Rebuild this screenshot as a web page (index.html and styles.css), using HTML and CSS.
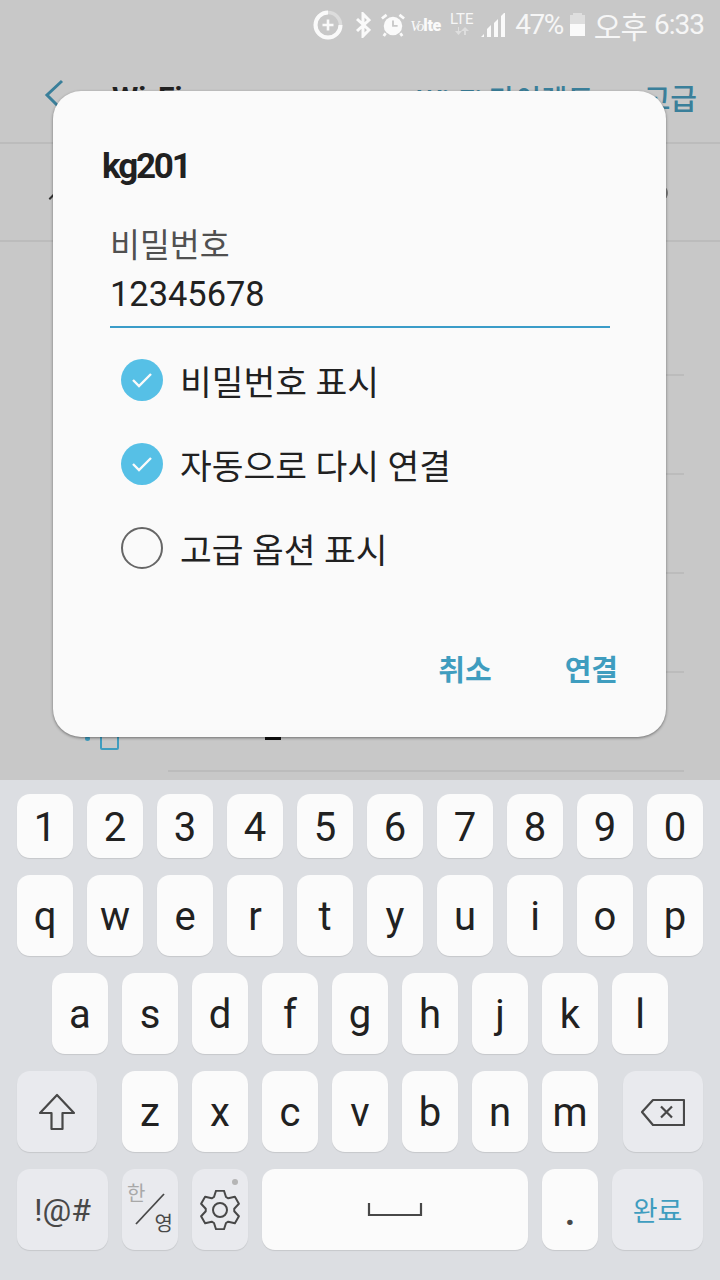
FILE: index.html
```html
<!DOCTYPE html>
<html>

<head>
	<title>Wi-Fi</title>
	<meta charset="utf-8">
	<link rel="stylesheet" href="styles.css">
</head>

<body>
	<div id="screen">
		<div class="status">
			<svg class="ic-saver" width="30" height="30" viewBox="0 0 30 30">
				<circle cx="15" cy="15" r="12.5" fill="none" stroke="#dcdcdc" stroke-width="3.5"/>
				<path d="M15 2.5A12.5 12.5 0 1 0 27.5 15" fill="none" stroke="#fafafa" stroke-width="4"/>
				<path d="M15 9.5v11M9.5 15h11" stroke="#fafafa" stroke-width="2.6"/>
			</svg>
			<svg class="ic-bt" width="16" height="26" viewBox="0 0 16 26">
				<path d="M2 7l12 11-6 6V2l6 6L2 19" fill="none" stroke="#fafafa" stroke-width="3"/>
			</svg>
			<svg class="ic-alarm" width="24" height="24" viewBox="0 0 26 26">
				<circle cx="13" cy="14" r="10" fill="#fafafa"/>
				<path d="M13 8v6h5" fill="none" stroke="#c8c8c8" stroke-width="2"/>
				<path d="M1 6l5-4M25 6l-5-4M5 22l-2 3M21 22l2 3" stroke="#fafafa" stroke-width="3"/>
			</svg>
			<div class="volte"><i>Vo</i><b>lte</b></div>
			<div class="lte">
				<span>LTE</span>
				<svg width="16" height="8" viewBox="0 0 14 8">
					<path d="M4 0v4h3L3.5 8 0 4h3V0zM10 0l4 4h-3v4H9V4H6z" fill="#dedede"/>
				</svg>
			</div>
			<svg class="ic-signal" width="24" height="24" viewBox="0 0 24 24">
				<path d="M0 24l3-3v3zM6 24v-8l4-4v12zM13 24V10l4-4v18zM20 24V3l4-4v25z" fill="#fafafa"/>
			</svg>
			<span class="s-text pct">47%</span>
			<div class="batt">
				<div class="batt-cap"></div>
				<div class="batt-body"><div class="batt-fill"></div></div>
			</div>
			<span class="s-text ampm">오후</span>
			<span class="s-text time">6:33</span>
		</div>

		<div class="appbar">
			<svg class="back" width="20" height="34" viewBox="0 0 20 34">
				<path d="M18 2L3 16l15 15" fill="none" stroke="#3a7f9a" stroke-width="3"/>
			</svg>
			<span class="appbar-title">Wi-Fi</span>
			<span class="appbar-link direct">Wi-Fi 다이렉트</span>
			<span class="appbar-link">고급</span>
		</div>

		<div class="current">
			<div class="cur-icon"></div>
			<div class="cur-right"></div>
		</div>

		<div class="list">
			<div class="row first"></div>
			<div class="row"></div>
			<div class="row"></div>
			<div class="row"></div>
			<div class="row last">
				<div class="lock-dot"></div>
				<div class="lock-box"></div>
				<div class="row-dash"></div>
			</div>
		</div>

		<div class="keyboard">
			<div class="kb-row nums">
				<div class="key">1</div>
				<div class="key">2</div>
				<div class="key">3</div>
				<div class="key">4</div>
				<div class="key">5</div>
				<div class="key">6</div>
				<div class="key">7</div>
				<div class="key">8</div>
				<div class="key">9</div>
				<div class="key">0</div>
			</div>
			<div class="kb-row">
				<div class="key">q</div>
				<div class="key">w</div>
				<div class="key">e</div>
				<div class="key">r</div>
				<div class="key">t</div>
				<div class="key">y</div>
				<div class="key">u</div>
				<div class="key">i</div>
				<div class="key">o</div>
				<div class="key">p</div>
			</div>
			<div class="kb-row centered">
				<div class="key">a</div>
				<div class="key">s</div>
				<div class="key">d</div>
				<div class="key">f</div>
				<div class="key">g</div>
				<div class="key">h</div>
				<div class="key">j</div>
				<div class="key">k</div>
				<div class="key">l</div>
			</div>
			<div class="kb-row">
				<div class="key func shift">
					<svg width="38" height="38" viewBox="0 0 38 38">
						<path d="M19 2L2 20h11.5v16h11V20H36z" fill="none" stroke="#484848" stroke-width="2.2" stroke-linejoin="round"/>
					</svg>
				</div>
				<div class="key">z</div>
				<div class="key">x</div>
				<div class="key">c</div>
				<div class="key">v</div>
				<div class="key">b</div>
				<div class="key">n</div>
				<div class="key">m</div>
				<div class="key func del">
					<svg width="44" height="28" viewBox="0 0 44 28">
						<path d="M1 14L12 2h31v25H12z" fill="none" stroke="#484848" stroke-width="2.2" stroke-linejoin="round"/>
						<path d="M20 8.500l11 11M31 8.500l-11 11" stroke="#484848" stroke-width="2.2"/>
					</svg>
				</div>
			</div>
			<div class="kb-row">
				<div class="key func sym">!@#</div>
				<div class="key func hanja">
					<span class="han">한</span>
					<span class="yeong">영</span>
					<svg class="slash" width="56" height="82" viewBox="0 0 56 82">
						<path d="M14 55L42 25" stroke="#484848" stroke-width="1.8"/>
					</svg>
				</div>
				<div class="key func gear">
					<svg width="40" height="40" viewBox="0 0 40 40">
						<polygon points="14,7 16,.8 24,.8 26,7 28.260,8.300 34.890,6.790 38.890,13.710 34.260,18.700 34.260,21.300 38.890,26.290 34.890,33.210 28.260,31.700 26,33 24,39.200 16,39.200 14,33 11.740,31.700 5.110,33.210 1.110,26.290 5.740,21.300 5.740,18.700 1.110,13.710 5.110,6.790 11.740,8.300" fill="none" stroke="#484848" stroke-width="2" stroke-linejoin="round"/>
						<circle cx="20" cy="20" r="7" fill="none" stroke="#484848" stroke-width="2"/>
					</svg>
					<div class="gear-dot"></div>
				</div>
				<div class="key space">
					<svg width="56" height="14" viewBox="0 0 56 14">
						<path d="M2 0v12h52V0" fill="none" stroke="#484848" stroke-width="2.2"/>
					</svg>
				</div>
				<div class="key period">.</div>
				<div class="key func done">완료</div>
			</div>
		</div>

		<div class="dialog">
			<div class="dlg-title">kg201</div>
			<div class="field">
				<div class="field-label">비밀번호</div>
				<div class="field-value">12345678</div>
			</div>
			<div class="option">
				<div class="check on">
					<svg width="22" height="18" viewBox="0 0 22 18">
						<path d="M2 9l6 6L20 3" fill="none" stroke="#fafafa" stroke-width="2.4"/>
					</svg>
				</div>
				<span>비밀번호 표시</span>
			</div>
			<div class="option">
				<div class="check on">
					<svg width="22" height="18" viewBox="0 0 22 18">
						<path d="M2 9l6 6L20 3" fill="none" stroke="#fafafa" stroke-width="2.4"/>
					</svg>
				</div>
				<span>자동으로 다시 연결</span>
			</div>
			<div class="option">
				<div class="check"></div>
				<span>고급 옵션 표시</span>
			</div>
			<div class="dlg-buttons">
				<span class="dlg-btn">취소</span>
				<span class="dlg-btn">연결</span>
			</div>
		</div>
	</div>
</body>

</html>
```

FILE: styles.css
```css
:root {
	--dim: #c8c8c8;
	--line: #bcbcbc;
	--teal-dim: #3a7f9a;
	--teal: #3f9dbf;
	--kb: #dcdee2;
	--key: #fbfbfb;
	--key-func: #e9eaee;
	--ink: #212121;
	--icon: #484848;
}

* {
	box-sizing: border-box;
}

body {
	margin: 0;
	padding: 0;
	font-family: Roboto, "Noto Sans CJK KR", sans-serif;
}

#screen {
	position: relative;
	width: 720px;
	height: 1280px;
	overflow: hidden;
	display: flex;
	flex-direction: column;
	background-color: var(--dim);
}

/* status bar */
.status {
	height: 52px;
	flex: none;
	display: flex;
	align-items: center;
	justify-content: flex-end;
	padding: 0 16px 3px 0;
	color: #f6f6f6;
}

.ic-saver {
	margin-right: 12px;
}

.ic-bt {
	margin-right: 10px;
}

.ic-alarm {
	margin-right: 5px;
}

.volte {
	width: 31px;
	font-size: 13px;
	color: #fafafa;
	margin-right: 8px;
	margin-top: 2px;
	white-space: nowrap;
}

.volte i {
	font-family: "Liberation Serif", serif;
	font-size: 15px;
	letter-spacing: -1px;
}

.volte b {
	font-size: 16px;
	font-weight: 900;
	letter-spacing: -.3px;
}

.lte {
	width: 25px;
	display: flex;
	flex-direction: column;
	align-items: center;
	font-size: 15px;
	line-height: 14px;
	margin-right: 7px;
	margin-top: -2px;
}

.lte svg {
	display: block;
	margin-top: 1px;
}

.ic-signal {
	margin-right: 10px;
}

.s-text {
	font-size: 28px;
	letter-spacing: -1.5px;
	white-space: nowrap;
}

.pct {
	margin-right: 7px;
}

.batt {
	width: 15px;
	margin-right: 9px;
	display: flex;
	flex-direction: column;
	align-items: center;
}

.batt-cap {
	width: 9px;
	height: 2px;
	background-color: #dedede;
}

.batt-body {
	width: 100%;
	height: 21px;
	background-color: #dedede;
	display: flex;
	align-items: flex-end;
}

.batt-fill {
	width: 100%;
	height: 12px;
	background-color: #fafafa;
}

.ampm {
	font-size: 30px;
	letter-spacing: -1px;
	margin-right: 7px;
}

.time {
	letter-spacing: -1px;
}

/* screen behind the dialog */
.appbar {
	height: 92px;
	flex: none;
	display: flex;
	align-items: center;
	padding: 0 23px 0 44px;
	border-bottom: 2px solid var(--line);
}

.back {
	flex: none;
	margin-right: 48px;
	margin-top: -3px;
}

.appbar-title {
	font-size: 30px;
	font-weight: 700;
	color: var(--ink);
	margin-right: auto;
}

.appbar-link {
	font-size: 29px;
	font-weight: 500;
	color: var(--teal-dim);
}

.direct {
	font-size: 28.500px;
	margin-right: 50px;
}

.current {
	height: 98px;
	flex: none;
	border-bottom: 2px solid var(--line);
	display: flex;
	justify-content: space-between;
	align-items: center;
	padding: 0 52px 0 48px;
}

.cur-icon {
	width: 9px;
	height: 2px;
	background-color: #333;
	transform: rotate(-45deg);
	margin-top: 8px;
}

.cur-right {
	width: 8px;
	height: 12px;
	border-radius: 50%;
	background-color: #777;
	margin-top: 2px;
}

.list {
	flex: 1;
	padding: 0 36px 0 168px;
}

.row {
	height: 99px;
	border-bottom: 2px solid var(--line);
}

.row.first {
	height: 134px;
}

.row.last {
	position: relative;
}

.lock-dot {
	position: absolute;
	left: -83px;
	top: 63px;
	width: 5px;
	height: 5px;
	border-radius: 50%;
	background-color: var(--teal);
}

.lock-box {
	position: absolute;
	left: -68px;
	top: 60px;
	width: 19px;
	height: 17px;
	border: 2px solid var(--teal);
	border-radius: 2px;
}

.row-dash {
	position: absolute;
	left: 97px;
	top: 60px;
	width: 16px;
	height: 7px;
	background-color: #111;
}

/* keyboard */
.keyboard {
	height: 500px;
	flex: none;
	background-color: var(--kb);
	padding: 14px 17px 0;
	display: flex;
	flex-direction: column;
	gap: 17px;
}

.kb-row {
	height: 81px;
	display: flex;
	gap: 14px;
}

.kb-row.nums {
	height: 64px;
}

.kb-row.centered {
	padding-left: 35px;
}

.key {
	width: 56px;
	flex: none;
	display: flex;
	align-items: center;
	justify-content: center;
	padding-top: 2px;
	background-color: var(--key);
	border-radius: 13px;
	box-shadow: 0 1px 1px rgba(0, 0, 0, 0.1);
	font-size: 40px;
	color: var(--ink);
	position: relative;
}

.func {
	padding-top: 0;
	background-color: var(--key-func);
	color: var(--icon);
}

.shift {
	width: 80px;
	margin-right: 11px;
}

.del {
	width: 80px;
	margin-left: 11px;
}

.sym {
	width: 91px;
	font-size: 32px;
}

.hanja {
	font-size: 20px;
	flex-direction: column;
	align-items: flex-start;
	justify-content: space-between;
	padding: 13px 5px 14px;
}

.han {
	color: #a8a8a8;
	line-height: 24px;
}

.yeong {
	align-self: flex-end;
	line-height: 24px;
	color: var(--icon);
}

.slash {
	position: absolute;
	left: 0;
	top: 0;
}

.gear-dot {
	position: absolute;
	right: 10px;
	top: 10px;
	width: 6px;
	height: 6px;
	border-radius: 50%;
	background-color: #b5b5b5;
}

.space {
	width: 266px;
	padding-top: 0;
}

.period {
	font-weight: 500;
	color: var(--icon);
	padding-top: 4px;
}

.done {
	width: 91px;
	font-size: 27px;
	color: var(--teal);
}

/* dialog */
.dialog {
	position: absolute;
	left: 53px;
	top: 91px;
	width: 613px;
	height: 646px;
	background-color: #fafafa;
	border-radius: 28px;
	box-shadow: 0 1px 3px rgba(0, 0, 0, 0.45);
}

.dlg-title {
	margin: 53px 0 0 49px;
	height: 46px;
	line-height: 46px;
	font-size: 35px;
	font-weight: 700;
	letter-spacing: -2.2px;
	color: var(--ink);
}

.field {
	margin: 34px 0 10px 57px;
	width: 500px;
	height: 104px;
	border-bottom: 2px solid #3a9cc8;
}

.field-label {
	height: 44px;
	line-height: 44px;
	font-size: 32.500px;
	color: #505050;
}

.field-value {
	height: 52px;
	line-height: 52px;
	font-size: 34.400px;
	color: var(--ink);
}

.option {
	height: 84px;
	display: flex;
	align-items: center;
	padding-left: 68px;
	font-size: 34.500px;
	color: var(--ink);
}

.check {
	width: 42px;
	height: 42px;
	flex: none;
	border-radius: 50%;
	border: 2.500px solid #666;
	margin-right: 17px;
	display: flex;
	align-items: center;
	justify-content: center;
}

.check.on {
	border: none;
	background-color: #56c0e6;
}

.dlg-buttons {
	margin-top: 48px;
	height: 60px;
	display: flex;
	align-items: center;
	justify-content: flex-end;
	gap: 73px;
	padding-right: 48px;
}

.dlg-btn {
	font-size: 29px;
	font-weight: 700;
	color: var(--teal);
}
```
